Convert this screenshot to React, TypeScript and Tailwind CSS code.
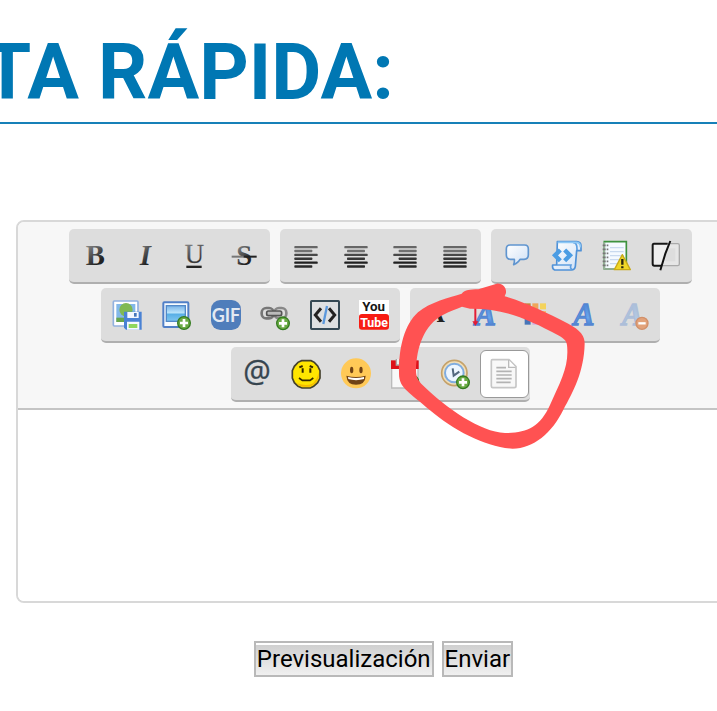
import type { ReactNode } from 'react';

function Icon({ children }: { children: ReactNode }) {
  return (
    <svg viewBox="0 0 90 90" className="h-[30px] w-[30px] shrink-0 overflow-visible" aria-hidden="true">
      {children}
    </svg>
  );
}

function Tool({ label, active = false, children }: { label: string; active?: boolean; children: ReactNode }) {
  return (
    <button
      type="button"
      aria-label={label}
      aria-pressed={active}
      className={
        active
          ? 'flex h-12 flex-1 items-center justify-center rounded-md border border-[#999] bg-white'
          : 'flex h-12 flex-1 items-center justify-center rounded-md border border-transparent'
      }
    >
      <Icon>{children}</Icon>
    </button>
  );
}

function Group({ className, children }: { className: string; children: ReactNode }) {
  return (
    <div className={`flex h-[55px] items-center rounded-[5px] border-b-2 border-[#afafaf] bg-[#ddd] px-px ${className}`}>
      {children}
    </div>
  );
}

function Letter({ children, className }: { children: string; className: string }) {
  return (
    <text x="46" y="72" textAnchor="middle" fill="url(#ink)" className={`font-['Liberation_Serif',serif] ${className}`}>
      {children}
    </text>
  );
}

function Lines({ rows }: { rows: number[][] }) {
  return (
    <>
      {rows.map(([x1, x2], i) => (
        <rect key={i} x={x1} y={15 + i * 11.6} width={x2 - x1} height="7" rx="2" fill={['#666', '#707070', '#484848', '#363636', '#202020', '#2a2a2a'][i]} />
      ))}
    </>
  );
}

function Badge({ cx, cy }: { cx: number; cy: number }) {
  return (
    <g>
      <circle cx={cx} cy={cy} r="19" fill="#6bab45" stroke="#347b20" strokeWidth="4" />
      <path d={`M${cx - 12} ${cy}h24M${cx} ${cy - 12}v24`} stroke="#fff" strokeWidth="8" />
    </g>
  );
}

function BlueA({ x = 45 }: { x?: number }) {
  return (
    <text x={x} y="74" textAnchor="middle" fill="url(#blueInk)" stroke="#5486d2" strokeWidth="4" className="font-['Liberation_Serif',serif] text-[94px] font-bold italic">
      A
    </text>
  );
}

function Gradients() {
  return (
    <svg className="absolute h-0 w-0" aria-hidden="true">
      <defs>
        <linearGradient id="ink" x1="0" y1="0" x2="0.5" y2="1">
          <stop offset="0.2" stopColor="#858585" />
          <stop offset="0.85" stopColor="#222" />
        </linearGradient>
        <linearGradient id="blueInk" x1="0" y1="0" x2="0" y2="1">
          <stop offset="0" stopColor="#3f7ad0" />
          <stop offset="0.6" stopColor="#69a4ea" />
          <stop offset="1" stopColor="#3766bf" />
        </linearGradient>
        <linearGradient id="paper" x1="0" y1="0" x2="1" y2="1">
          <stop offset="0" stopColor="#fff" />
          <stop offset="1" stopColor="#cfe0f5" />
        </linearGradient>
        <linearGradient id="sky" x1="0" y1="0" x2="0" y2="1">
          <stop offset="0" stopColor="#78b2e8" />
          <stop offset="0.45" stopColor="#b9e3fa" />
          <stop offset="0.55" stopColor="#58afe6" />
          <stop offset="1" stopColor="#7fc6f0" />
        </linearGradient>
      </defs>
    </svg>
  );
}

function Toolbar() {
  return (
    <div className="relative flex flex-col items-center gap-1 rounded-t-md border-b-2 border-[#c4c4c4] bg-[#f7f7f7] pt-[7px] pb-1.5">
      <Gradients />
      <div className="flex gap-[10px]">
        <Group className="w-[201px]">
          <Tool label="Negrita">
            <Letter className="text-[86px] font-bold">B</Letter>
          </Tool>
          <Tool label="Cursiva">
            <Letter className="text-[86px] font-bold italic">I</Letter>
          </Tool>
          <Tool label="Subrayado">
            <text x="46" y="65" textAnchor="middle" fill="url(#ink)" stroke="#777" strokeWidth="1" className="font-['Liberation_Serif',serif] text-[80px]">
              U
            </text>
            <rect x="22" y="74" width="46" height="7" fill="#222" />
          </Tool>
          <Tool label="Tachado">
            <Letter className="text-[86px] font-bold">S</Letter>
            <rect x="8" y="44" width="38" height="6" fill="#777" />
            <rect x="44" y="44" width="39" height="6" fill="#222" />
          </Tool>
        </Group>
        <Group className="w-[201px]">
          <Tool label="Alinear a la izquierda">
            <Lines rows={[[10, 80], [10, 64], [10, 80], [10, 64], [10, 80], [10, 64]]} />
          </Tool>
          <Tool label="Centrar">
            <Lines rows={[[10, 80], [18, 72], [10, 80], [18, 72], [10, 80], [18, 72]]} />
          </Tool>
          <Tool label="Alinear a la derecha">
            <Lines rows={[[10, 80], [26, 80], [10, 80], [26, 80], [10, 80], [26, 80]]} />
          </Tool>
          <Tool label="Justificar">
            <Lines rows={[[10, 80], [10, 80], [10, 80], [10, 80], [10, 80], [10, 80]]} />
          </Tool>
        </Group>
        <Group className="w-[201px]">
          <Tool label="Cita">
            <path d="M24 12H68Q79 12 79 24V42Q79 54 66 55H54Q50 64 35 71Q38 64 37 55H25Q13 54 13 42V24Q13 12 24 12Z" fill="url(#paper)" stroke="#6095cf" strokeWidth="5" strokeLinejoin="round" />
          </Tool>
          <Tool label="Código">
            <path d="M16 2H74Q88 3 87 17V29H74L70 76Q68 87 58 87H8Q0 84 2 72H14Z" fill="url(#paper)" stroke="#4f91d7" strokeWidth="5" strokeLinejoin="round" />
            <path d="M63 5Q76 3 75 28M15 72H57Q53 84 61 85" fill="none" stroke="#5d9ee0" strokeWidth="5" />
            <path d="M17 4H74Q86 6 85 19" fill="none" stroke="#8dc8f5" strokeWidth="5" />
            <path d="M25 27L9 43L25 59M38 27L54 43L38 59" fill="none" stroke="#4c9de3" strokeWidth="13" />
          </Tool>
          <Tool label="Spoiler con aviso">
            <path d="M10 2H76V84H10Z" fill="#f5faff" stroke="#3d923e" strokeWidth="5" />
            <path d="M10 4V84H65" fill="none" stroke="#9caf9d" strokeWidth="4" />
            <path d="M27 20H68M27 32H68M27 44H68M27 56H60M27 68H50" stroke="#c9daef" strokeWidth="4" />
            <path d="M5 13H22M5 25H22M5 37H22M5 49H22M5 61H22M5 73H22" stroke="#777" strokeWidth="5" strokeDasharray="9 3" />
            <path d="M64 41L88 86H40Z" fill="#efd727" stroke="#c9aa19" strokeWidth="4" strokeLinejoin="round" />
            <path d="M64 54V71M64 76V82" stroke="#292510" strokeWidth="7" />
          </Tool>
          <Tool label="Spoiler">
            <rect x="26" y="8" width="59" height="66" rx="5" fill="#e6e6e6" stroke="#aaa" strokeWidth="4" />
            <rect x="43" y="22" width="30" height="39" fill="#ddd" />
            <path d="M50 8H9Q5 8 5 13V68Q5 74 10 74H32" fill="#eee" stroke="#171717" strokeWidth="6" />
            <path d="M58 0L43 38L28 88" fill="none" stroke="#111" strokeWidth="6" />
          </Tool>
        </Group>
      </div>
      <div className="flex gap-[10px]">
        <Group className="w-[299px]">
          <Tool label="Subir imagen">
            <rect x="4" y="3" width="74" height="75" rx="3" fill="#fff" stroke="#92b1df" strokeWidth="5" />
            <rect x="13" y="12" width="57" height="54" fill="#83b8e9" />
            <path d="M13 53H70V66H13Z" fill="#68a64b" />
            <path d="M39 38H48V59H39Z" fill="#826330" />
            <circle cx="42" cy="29" r="20" fill="#80b952" />
            <path d="M36 35H89V89H42L36 83Z" fill="#4a82d4" />
            <path d="M46 36H80V54H46ZM45 65H82V89H45Z" fill="#f4f8ff" />
            <path d="M50 72H76V84H50Z" fill="#8fd65e" />
            <path d="M66 39H74V50H66Z" fill="#4777bb" />
          </Tool>
          <Tool label="Insertar imagen">
            <rect x="7" y="7" width="75" height="74" rx="3" fill="#f7fbff" stroke="#507fc7" strokeWidth="6" />
            <rect x="16" y="17" width="57" height="47" fill="url(#sky)" stroke="#5289c8" strokeWidth="4" />
            <Badge cx={69} cy={69} />
          </Tool>
          <Tool label="GIF">
            <rect x="0" y="0" width="90" height="90" rx="28" fill="#4f7dbb" />
            <text x="45" y="65" textAnchor="middle" fill="#e3e9f2" className="font-[Lato,sans-serif] text-[54px] font-bold">
              GIF
            </text>
          </Tool>
          <Tool label="Enlace">
            <rect x="5" y="24" width="36" height="31" rx="14" fill="none" stroke="#777" strokeWidth="8" />
            <rect x="43" y="24" width="36" height="31" rx="14" fill="none" stroke="#888" strokeWidth="8" />
            <rect x="20" y="33" width="45" height="14" rx="5" fill="#bbb" stroke="#555" strokeWidth="5" />
            <Badge cx={69} cy={70} />
          </Tool>
          <Tool label="Insertar código">
            <rect x="3" y="3" width="84" height="84" rx="2" fill="#dde0e2" stroke="#344955" strokeWidth="6" />
            <path d="M33 25L16 45L33 65M57 25L74 45L57 65" fill="none" stroke="#222" strokeWidth="9" />
            <path d="M51 18L40 72" stroke="#5b98dc" strokeWidth="7" />
          </Tool>
          <Tool label="YouTube">
            <rect x="0" y="0" width="90" height="46" fill="#fff" />
            <rect x="0" y="42" width="90" height="47" rx="9" fill="#f81c12" />
            <text x="44" y="33" textAnchor="middle" fill="#151515" className="font-[Roboto,sans-serif] text-[40px] font-bold">
              You
            </text>
            <text x="45" y="80" textAnchor="middle" fill="#fff" className="font-[Roboto,sans-serif] text-[37px] font-bold">
              Tube
            </text>
          </Tool>
        </Group>
        <Group className="w-[250px]">
          <Tool label="Fuente">
            <text x="43" y="67" textAnchor="middle" fill="#222" className="font-['Liberation_Serif',serif] text-[78px] font-bold">
              A
            </text>
          </Tool>
          <Tool label="Tamaño">
            <BlueA x={46} />
            <path d="M16 10V72" stroke="#e21c36" strokeWidth="6" />
            <path d="M7 64H25L16 78Z" fill="#e21c36" />
          </Tool>
          <Tool label="Color">
            <path d="M14 10H32V28H14Z" fill="#c9823d" />
            <path d="M37 10H55V28H37Z" fill="#efa65a" />
            <path d="M60 10H78V28H60Z" fill="#f4d35c" />
            <path d="M14 33H32V51H14Z" fill="#65a35a" />
            <path d="M37 33H55V51H37Z" fill="#a3d16b" />
            <path d="M60 33H78V51H60Z" fill="#f4bf73" />
            <path d="M14 56H32V74H14Z" fill="#4775b8" />
            <path d="M37 56H55V74H37Z" fill="#d5a9e0" />
            <path d="M60 56H78V74H60Z" fill="#e6cbe9" />
          </Tool>
          <Tool label="Estilo">
            <BlueA x={42} />
          </Tool>
          <Tool label="Quitar formato">
            <g opacity="0.35">
              <BlueA x={40} />
            </g>
            <circle cx="69" cy="70" r="18" fill="#e2a27a" stroke="#d2906a" strokeWidth="4" />
            <path d="M58 70H80" stroke="#fff" strokeWidth="7" />
          </Tool>
        </Group>
      </div>
      <Group className="w-[299px]">
        <Tool label="Mencionar">
          <text x="45" y="70" textAnchor="middle" fill="#36454f" stroke="#36454f" strokeWidth="1" className="font-['Open_Sans',sans-serif] text-[92px]">
            @
          </text>
        </Tool>
        <Tool label="Emoticonos">
          <path d="M32 5H60L70 10L80 21L87 35V57L80 71L68 82L58 87H33L21 82L10 71L4 57V35L10 22L21 10Z" fill="#ffe500" stroke="#44402c" strokeWidth="5" />
          <path d="M83 40V56L76 69L66 78L57 83H34L24 79L18 73Q45 82 64 74Q78 64 83 40Z" fill="#f5bb00" />
          <path d="M25 25L35 21M56 21L66 25M35 28V41M58 28V41" stroke="#332800" strokeWidth="6" />
          <path d="M24 57L34 64H57L67 57" fill="none" stroke="#332800" strokeWidth="5" />
        </Tool>
        <Tool label="Emojis">
          <circle cx="45" cy="43" r="45" fill="#ffc957" />
          <ellipse cx="32" cy="33" rx="5" ry="10" fill="#714315" />
          <ellipse cx="60" cy="33" rx="5" ry="10" fill="#714315" />
          <path d="M16 50Q45 58 74 50Q73 77 45 77Q18 77 16 50Z" fill="#714315" />
          <path d="M21 54Q45 60 69 54V60Q45 67 22 60Z" fill="#fff" />
        </Tool>
        <Tool label="Calendario">
          <path d="M5 8H84V87H5Z" fill="#f8f8f8" stroke="#bbb" strokeWidth="4" />
          <path d="M3 4H86V30H3Z" fill="#dd1019" />
          <path d="M19 0V18H29V0M60 0V18H70V0" fill="#eee" stroke="#aaa" strokeWidth="4" />
          <Badge cx={67} cy={68} />
        </Tool>
        <Tool label="Fecha y hora">
          <circle cx="43" cy="42" r="38" fill="#f1dfb9" stroke="#c5a26a" strokeWidth="5" />
          <circle cx="43" cy="42" r="28" fill="#edf6ff" stroke="#80ade0" strokeWidth="6" />
          <path d="M38 28L41 50L58 38" fill="none" stroke="#53697f" strokeWidth="6" />
          <Badge cx={69} cy={70} />
        </Tool>
        <Tool label="Ver código fuente" active>
          <path d="M10 2H60L81 23V81Q81 86 76 86H11Q7 86 7 81V6Q7 2 10 2Z" fill="#f8f8f8" stroke="#c6c6c6" strokeWidth="5" />
          <path d="M59 3V25H80" fill="#fff" stroke="#bbb" strokeWidth="4" />
          <path d="M22 26H51M22 37H68M22 48H68M22 59H68M22 70H65" stroke="#b3b3b3" strokeWidth="5" />
        </Tool>
      </Group>
      <svg viewBox="0 0 840 540" className="pointer-events-none absolute top-[53px] left-[372px] z-10 h-[180px] w-[280px]" aria-hidden="true">
        <path
          fill="#ff5252"
          fillRule="evenodd"
          d="M320 26C338 24 350 38 348 54L344 64C410 84 470 114 535 146C572 166 584 182 584 206C582 290 550 350 520 404C486 474 430 520 368 521C290 518 190 466 120 406C60 352 27 340 27 296C26 220 42 150 84 112C120 80 180 68 215 56C225 44 240 44 265 43ZM240 101C330 100 400 124 510 184C530 196 532 205 532 225C534 280 510 322 480 390C450 456 410 474 345 474C270 470 170 400 100 332C82 314 78 305 78 284C80 220 100 150 160 119C180 108 200 102 216 95Z"
        />
      </svg>
    </div>
  );
}

const submitClass =
  'h-9 border-2 border-[#b9b9b9] bg-linear-to-b from-[#cecece] to-[#f0f0f0] px-px text-2xl leading-8 text-black shadow-[inset_0_2px_0_#fff]';

export default function App() {
  return (
    <main className="overflow-x-hidden bg-white pb-8 font-[Roboto,sans-serif]">
      <header className="border-b-2 border-[#1680b8] pt-[33px] pb-[9px]">
        <h1 className="flex w-[394px] justify-end text-[77px] leading-[80px] font-bold whitespace-nowrap text-[#0077b3]">
          RESPUESTA RÁPIDA:
        </h1>
      </header>
      <form className="-mr-7 pt-24" onSubmit={(e) => e.preventDefault()}>
        <div className="ml-4 rounded-lg border-2 border-[#d8d8d8] bg-white">
          <Toolbar />
          <textarea aria-label="Mensaje" className="block h-[191px] w-full resize-none rounded-b-md bg-white p-3 text-2xl outline-none" />
        </div>
        <div className="mt-[38px] ml-[22px] flex justify-center gap-2">
          <button type="button" className={submitClass}>
            Previsualización
          </button>
          <button type="submit" className={submitClass}>
            Enviar
          </button>
        </div>
      </form>
    </main>
  );
}
